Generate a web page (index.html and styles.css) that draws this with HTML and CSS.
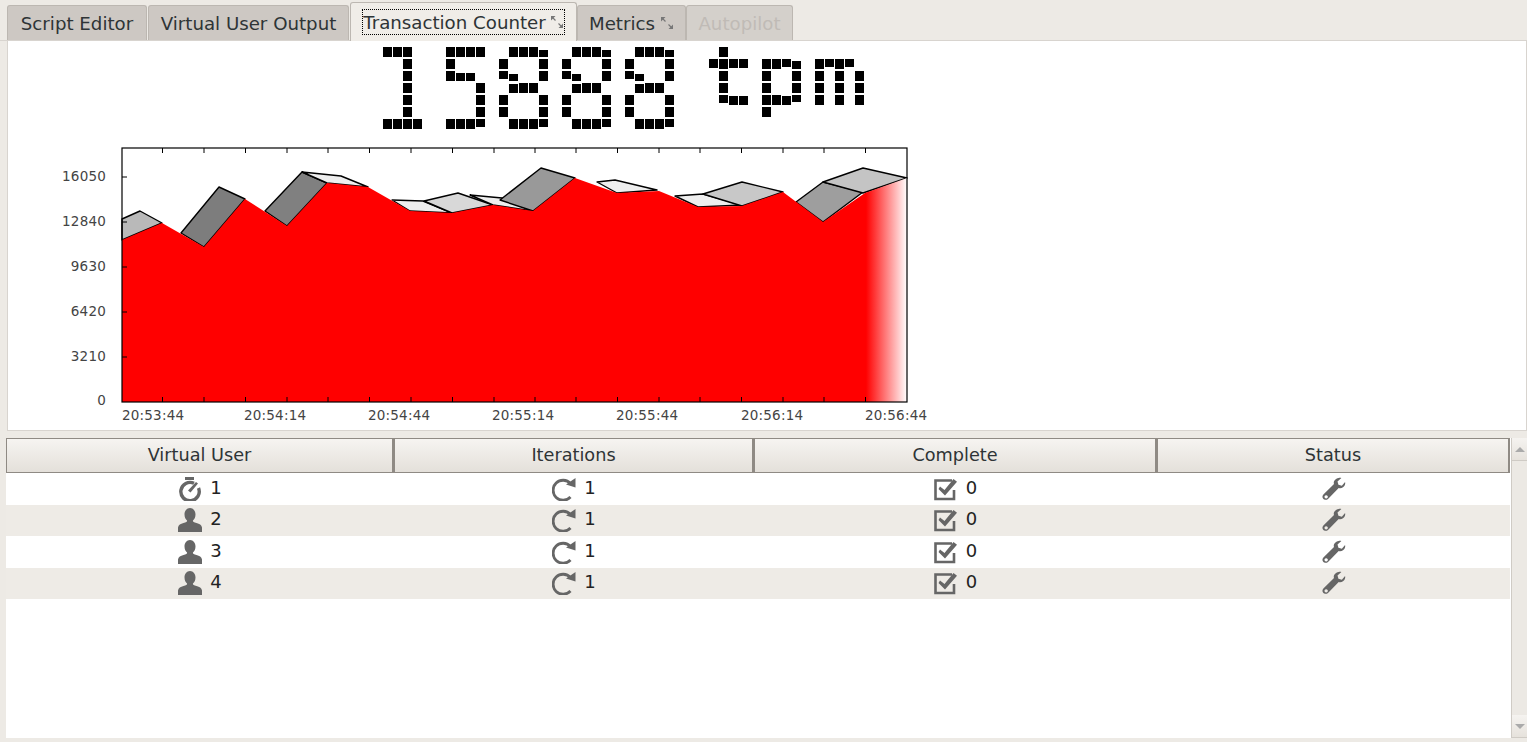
FILE: index.html
```html
<!DOCTYPE html>
<html lang="en">
<head>
<meta charset="UTF-8">
<title>Transaction Counter</title>
<link rel="stylesheet" href="styles.css">
</head>
<body>
<svg class="defs" width="0" height="0" aria-hidden="true">
    <defs>
        <!-- samples the real text on a grid so it reads as a dot matrix -->
        <filter id="dots" x="0" y="0" width="100%" height="100%" primitiveUnits="userSpaceOnUse" color-interpolation-filters="sRGB">
            <feFlood x="1" y="9" width="1" height="4" flood-color="#000"/>
            <feComposite width="10" height="12"/>
            <feTile result="grid"/>
            <feComposite in="SourceGraphic" in2="grid" operator="in"/>
            <feComponentTransfer>
                <feFuncA type="discrete" tableValues="0 0 0 0 0 0 0 0 0 1"/>
            </feComponentTransfer>
            <feMorphology operator="dilate" radius="4 3"/>
            <feGaussianBlur stdDeviation="0.5"/>
        </filter>
        <symbol id="i-watch" viewBox="0 0 24 24">
            <path d="M7 0h9v3H7z" fill="#666"/>
            <path d="M16 6.300A9.200 9.200 0 1 0 20.500 11" fill="none" stroke="#666" stroke-width="3.400"/>
            <path d="M10 13.500L18 5l2 1.500-7.500 9z" fill="#666"/>
        </symbol>
        <symbol id="i-user" viewBox="0 0 24 24">
            <path d="M12 0c3.400 0 5.500 3 5.500 6.500 0 2.800-1.200 4.900-2.600 6 0 1.400 1 1.800 3.600 2.400 3 .7 5 1.900 5.500 4.600V24H0v-4.500c.5-2.700 2.500-3.900 5.500-4.600 2.600-.6 3.600-1 3.600-2.400-1.400-1.100-2.600-3.200-2.600-6C6.500 3 8.600 0 12 0z" fill="#666"/>
        </symbol>
        <symbol id="i-redo" viewBox="0 0 24 24">
            <path d="M18.500 6.500A10 10 0 1 0 18.500 20" fill="none" stroke="#666" stroke-width="2.800"/>
            <path d="M14 7.500L23.500 1v9.500z" fill="#666"/>
        </symbol>
        <symbol id="i-check" viewBox="0 0 24 24">
            <path d="M18 3.500H1.500v18.500H20v-9" fill="none" stroke="#666" stroke-width="2.600"/>
            <path d="M6 9.500l4.500 3.500L19.500 2l3.500 2.800L11 18.500 4.500 12z" fill="#666"/>
        </symbol>
        <symbol id="i-wrench" viewBox="0 0 26 26">
            <path fill-rule="evenodd" d="M18 1c1-.3 2.200-.2 3 0l-4.200 4 1 3.500 3.700 1L25 5.500c.3 1 .2 2.300-.2 3.300-1 2.600-4 4-6.700 3.200L6.500 23.700c-1.700 1.600-4 1.200-5.200-.2-1.200-1.400-1-3.400.2-4.600l11.500-11.300C12 4.500 14.500 1.800 18 1zM4.500 19.700a1.800 1.800 0 1 0 .01 0z" fill="#666"/>
        </symbol>
        <symbol id="i-detach" viewBox="0 0 14 14">
            <path d="M1 1h4.500L1 5.500zM13 13H8.500L13 8.500z" fill="#777"/>
            <path d="M3 3l2.500 2.500M11 11L8.500 8.500" stroke="#777" stroke-width="1.200"/>
        </symbol>
    </defs>
</svg>

<div class="tabs">
    <div class="tab t1">Script Editor</div>
    <div class="tab t2">Virtual User Output</div>
    <div class="tab active"><span class="focus">Transaction Counter <svg class="detach"><use href="#i-detach"/></svg></span></div>
    <div class="tab t4">Metrics <svg class="detach"><use href="#i-detach"/></svg></div>
    <div class="tab off">Autopilot</div>
</div>

<div class="panel">
    <div class="led"><span class="d">1</span><span class="d d5">5</span><span class="d">8</span><span class="d">8</span><span class="d">8</span> <span class="u ut">t</span><span class="u">p</span><span class="u um">m</span></div>
    <svg class="chart" viewBox="8 142 932 285" width="932" height="285">
        <defs>
            <linearGradient id="fade" gradientUnits="userSpaceOnUse" x1="866" y1="0" x2="907" y2="0">
                <stop offset="0" stop-color="#f00"/>
                <stop offset="1" stop-color="#fff"/>
            </linearGradient>
        </defs>
        <g stroke="#000" stroke-width="1.400" stroke-linejoin="round">
            <polygon fill="#b9b9b9" points="162,223 140,211 122,219 122,240"/>
            <polygon fill="#7d7d7d" points="204,247 245,199 219,187 181,233"/>
            <polygon fill="#808080" points="287,226 327,183 302,172 265,211"/>
            <polygon fill="#eee" points="302,172 341,176 368,187 327,183"/>
            <polygon fill="#eee" points="392,200 423,201 452,213 410,211"/>
            <polygon fill="#d8d8d8" points="424,201 458,193 493,205 452,213"/>
            <polygon fill="#eee" points="470,195 502,198 533,211 493,205"/>
            <polygon fill="#999" points="500,200 541,168 575,178 533,211"/>
            <polygon fill="#eee" points="597,182 615,180 657,190 617,193"/>
            <polygon fill="#eee" points="675,196 703,194 742,205 698,207"/>
            <polygon fill="#c8c8c8" points="703,194 742,182 783,192 742,206"/>
            <polygon fill="#9e9e9e" points="796,202 823,182 863,192 823,222"/>
            <polygon fill="#c4c4c4" points="823,182 863,168 907,178 863,193"/>
        </g>
        <polygon fill="url(#fade)" points="122,240 162,223 204,247 245,199 287,226 327,183 368,187 410,211 452,213 493,205 533,211 575,178 617,193 659,191 698,207 742,206 783,192 823,222 865,193 907,178 907,402 122,402"/>
        <rect x="122" y="148" width="785" height="254" fill="none" stroke="#000" stroke-width="1.200"/>
        <path stroke="#000" stroke-width="1" d="M162.500 148v5M204 148v5M245.500 148v5M287 148v5M328 148v5M369.500 148v5M411 148v5M452.500 148v5M494 148v5M535 148v5M576 148v5M617.500 148v5M659 148v5M700 148v5M741.500 148v5M783 148v5M824 148v5M865.500 148v5M162.500 402v-5M204 402v-5M245.500 402v-5M287 402v-5M328 402v-5M369.500 402v-5M411 402v-5M452.500 402v-5M494 402v-5M535 402v-5M576 402v-5M617.500 402v-5M659 402v-5M700 402v-5M741.500 402v-5M783 402v-5M824 402v-5M865.500 402v-5M122 177h5M122 222h5M122 267h5M122 312h5M122 357h5"/>
        <g class="axis" text-anchor="end">
            <text x="106" y="181">16050</text>
            <text x="106" y="226">12840</text>
            <text x="106" y="271">9630</text>
            <text x="106" y="316">6420</text>
            <text x="106" y="361">3210</text>
            <text x="106" y="405">0</text>
        </g>
        <g class="axis">
            <text x="122" y="420">20:53:44</text>
            <text x="244" y="420">20:54:14</text>
            <text x="368" y="420">20:54:44</text>
            <text x="492" y="420">20:55:14</text>
            <text x="616" y="420">20:55:44</text>
            <text x="741" y="420">20:56:14</text>
            <text x="865" y="420">20:56:44</text>
        </g>
    </svg>
</div>

<div class="lower">
    <div class="table">
        <div class="head">Virtual User</div>
        <div class="head">Iterations</div>
        <div class="head">Complete</div>
        <div class="head">Status</div>

        <div class="cell"><svg class="ico"><use href="#i-watch"/></svg>1</div>
        <div class="cell"><svg class="ico"><use href="#i-redo"/></svg>1</div>
        <div class="cell"><svg class="ico"><use href="#i-check"/></svg>0</div>
        <div class="cell"><svg class="ico"><use href="#i-wrench"/></svg></div>

        <div class="cell alt"><svg class="ico"><use href="#i-user"/></svg>2</div>
        <div class="cell alt"><svg class="ico"><use href="#i-redo"/></svg>1</div>
        <div class="cell alt"><svg class="ico"><use href="#i-check"/></svg>0</div>
        <div class="cell alt"><svg class="ico"><use href="#i-wrench"/></svg></div>

        <div class="cell"><svg class="ico"><use href="#i-user"/></svg>3</div>
        <div class="cell"><svg class="ico"><use href="#i-redo"/></svg>1</div>
        <div class="cell"><svg class="ico"><use href="#i-check"/></svg>0</div>
        <div class="cell"><svg class="ico"><use href="#i-wrench"/></svg></div>

        <div class="cell alt"><svg class="ico"><use href="#i-user"/></svg>4</div>
        <div class="cell alt"><svg class="ico"><use href="#i-redo"/></svg>1</div>
        <div class="cell alt"><svg class="ico"><use href="#i-check"/></svg>0</div>
        <div class="cell alt"><svg class="ico"><use href="#i-wrench"/></svg></div>
    </div>
    <div class="scroll">
        <div class="arrow"><span class="up"></span></div>
        <div class="track"></div>
        <div class="arrow"><span class="down"></span></div>
    </div>
</div>
</body>
</html>
```

FILE: styles.css
```css
html, body {
    margin: 0;
    padding: 0;
    height: 742px;
    overflow: hidden;
}
body {
    background-color: #edeae5;
    font-family: "DejaVu Sans", sans-serif;
    color: #2e3436;
    display: flex;
    flex-direction: column;
}
.defs {
    position: absolute;
}

/* tabs */
.tabs {
    display: flex;
    height: 35px;
    padding: 5px 0 0 7px;
    border-bottom: 1px solid #d8d4cf;
    flex: none;
}
.tab {
    display: flex;
    align-items: center;
    justify-content: center;
    background-color: #cdc8c3;
    border: 1px solid #bcb7b1;
    border-bottom: none;
    border-radius: 3px 3px 0 0;
    font-size: 18.200px;
    box-sizing: border-box;
    white-space: nowrap;
}
.t1 {
    width: 140px;
    margin-right: 1px;
}
.t2 {
    width: 201px;
    margin-right: 1px;
}
.t4 {
    width: 109px;
}
.tab.active {
    width: 227px;
    background-color: #f0ede8;
    margin-top: -3px;
    margin-bottom: -1px;
}
.tab.off {
    width: 107px;
    color: #c0bbb6;
    background-color: #d4d0cb;
}
.focus {
    display: flex;
    align-items: center;
    gap: 4px;
    border: 1px dotted #000;
    height: 24px;
}
.detach {
    width: 14px;
    height: 14px;
    margin-left: 5px;
}
.focus .detach {
    margin-left: 0;
}

/* counter + chart */
.panel {
    margin-left: 7px;
    height: 389px;
    background-color: #fff;
    border: 1px solid #d8d4cf;
    border-top: none;
    flex: none;
    overflow: hidden;
}
.led {
    display: flex;
    height: 101px;
    margin-left: 358px;
    font-family: "DejaVu Sans Mono", monospace;
    color: #000;
    white-space: pre;
}
.d, .u {
    display: block;
    height: 101px;
    text-align: center;
    filter: url(#dots);
}
.d {
    width: 63px;
    font-size: 110px;
    line-height: 98px;
}
.d5 {
    box-sizing: border-box;
    padding-left: 4px;
}
.u {
    width: 53px;
    font-size: 84px;
    line-height: 70px;
}
.ut {
    margin-left: 21px;
}
.um {
    width: 58px;
    box-sizing: border-box;
    padding-left: 4.500px;
}
.chart {
    display: block;
}
.axis {
    font-family: "DejaVu Sans", sans-serif;
    font-size: 13.500px;
    letter-spacing: 0.200px;
    fill: #444;
}

/* table */
.lower {
    display: flex;
    margin-top: 7px;
    margin-left: 6px;
    height: 300px;
    flex: none;
    background-color: #fff;
}
.table {
    display: grid;
    grid-template-columns: 388px 360px 403px 353px;
    grid-template-rows: 35px repeat(4, 31.500px);
    width: 1505px;
    align-content: start;
}
.head {
    box-sizing: border-box;
    border: 1px solid #8f8a84;
    border-right-width: 2px;
    background-image: linear-gradient(#f6f4f1, #e4e0da);
    font-size: 17.700px;
    display: flex;
    align-items: center;
    justify-content: center;
    padding-bottom: 1px;
}
.cell {
    display: flex;
    align-items: center;
    justify-content: center;
    gap: 8px;
    font-size: 18px;
    color: #222;
    padding-bottom: 3px;
}
.cell.alt {
    background-color: #eeebe6;
}
.ico {
    width: 24px;
    height: 24px;
    margin-top: 3px;
}
.scroll {
    display: flex;
    flex-direction: column;
    width: 15px;
    margin-left: 1px;
    background-color: #f0ede9;
    border-left: 1px solid #cfcbc5;
}
.arrow {
    height: 22px;
    flex: none;
    display: flex;
    align-items: center;
    justify-content: center;
    background-image: linear-gradient(#f5f3f0, #e6e2dc);
    border-bottom: 1px solid #cfcbc5;
}
.track {
    flex: 1;
    background-color: #ece9e4;
}
.up, .down {
    width: 0;
    height: 0;
    border-left: 5px solid transparent;
    border-right: 5px solid transparent;
}
.up {
    border-bottom: 5px solid #aaa;
}
.down {
    border-top: 5px solid #aaa;
}
```
